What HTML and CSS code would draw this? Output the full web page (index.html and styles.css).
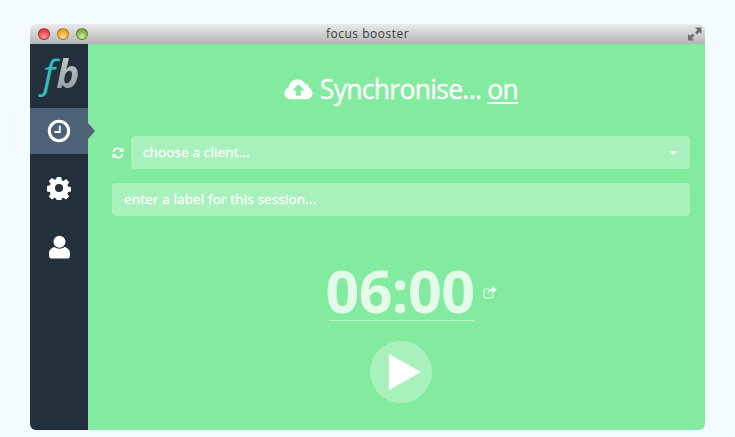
FILE: index.html
```html
<!DOCTYPE html>
<html lang="en">
<head>
<meta charset="utf-8">
<title>focus booster</title>
<link rel="stylesheet" href="styles.css">
</head>
<body>
<div class="window">
  <header class="titlebar">
    <div class="lights"><i class="light red"></i><i class="light yellow"></i><i class="light green"></i></div>
    <div class="title">focus booster</div>
    <svg class="resize" width="15" height="14" viewBox="0 0 15 14"><path d="M8 .5h6.500V7l-2-2-2.500 2.500-2-2L10.500 3zM1 7l2 2 2.500-2.500 2 2L5 11l2 2.500H1z" fill="#6f6f6f"/></svg>
  </header>
  <div class="body">
    <nav class="sidebar">
      <div class="logo"><span class="logo-f">f</span><span class="logo-b">b</span></div>
      <div class="nav-item active">
        <svg width="24" height="24" viewBox="0 0 24 24"><circle cx="12" cy="12" r="9.700" fill="none" stroke="#fff" stroke-width="3"/><path d="M12.800 6.500v6.500H7.500" fill="none" stroke="#fff" stroke-width="1.800"/></svg>
      </div>
      <div class="nav-item nudge">
        <svg width="24" height="24" viewBox="0 0 24 24"><path fill="#fff" fill-rule="evenodd" d="M9.800 1h4.400l.6 3.200 1.600.7 2.700-1.800 3.100 3.100-1.800 2.700.7 1.600 3 .6v4.400l-3 .6-.7 1.600 1.800 2.700-3.100 3.100-2.700-1.800-1.600.7-.6 3H9.800l-.6-3-1.600-.7-2.700 1.800-3.100-3.100 1.800-2.700-.7-1.600-3-.6V9.900l3-.6.7-1.600-1.800-2.700 3.100-3.100 2.700 1.800 1.600-.7zM12 8a4 4 0 1 0 0 8 4 4 0 0 0 0-8z"/></svg>
      </div>
      <div class="nav-item">
        <svg width="24" height="25" viewBox="0 0 24 25"><circle cx="12.500" cy="6.800" r="6" fill="#fff"/><path fill="#fff" d="M7.500 12c3 2.200 7 2.200 10 0 3 .8 5.500 3 5.500 6.500v2.500c0 1.500-1 2.500-2.500 2.500h-16C3 23.500 2 22.500 2 21v-2.500c0-3.500 2.500-5.700 5.500-6.500z"/></svg>
      </div>
    </nav>
    <main class="content">
      <h1 class="sync">
        <svg width="29" height="22" viewBox="0 0 30 22"><path fill="#fff" fill-rule="evenodd" d="M7 21.500C3 21.500.5 19 .5 15.500c0-2.800 1.700-5 4.200-5.800C5 4.800 9 .8 14 .8c3.700 0 7 2.200 8.300 5.500 1-.4 1.700-.4 2.200.1 1 .8 1.300 1.900 1 3.200 2.500.8 4 3 4 5.700 0 3.500-2.500 6.200-6.500 6.200zM15 6l-6.500 6.500h4V18h5v-5.500h4z"/></svg>
        <span>Synchronise... <u>on</u></span>
      </h1>
      <div class="row">
        <svg class="refresh" width="12" height="12" viewBox="0 0 13 13"><path fill="none" stroke="#fff" stroke-width="2" d="M1.500 5.500C2 3 4 1.500 6.500 1.500c1.700 0 3 .8 4 2M11.500 7.500C11 10 9 11.500 6.500 11.500c-1.700 0-3-.8-4-2"/><path fill="#fff" d="M12.500.5v4.800H7.700zM.5 12.500V7.700h4.800z"/></svg>
        <div class="field select"><span>choose a client...</span><i class="caret"></i></div>
      </div>
      <div class="field label-field"><span>enter a label for this session...</span></div>
      <div class="timer-row">
        <div class="timer">06:00</div>
        <svg class="popout" width="14" height="13" viewBox="0 0 14 13"><path fill="none" stroke="#fff" stroke-opacity=".8" stroke-width="1.200" d="M10 8.500v1.700c0 1.100-.7 1.800-1.800 1.800H2.800C1.700 12 1 11.300 1 10.200V4.800C1 3.700 1.700 3 2.800 3H6"/><path fill="#fff" fill-opacity=".85" d="M9 0l5 3.800-5 3.700V5.300C6.800 5.300 5.500 6.300 5 8.300c-.3-3.600 1.300-5.500 4-5.700z"/></svg>
      </div>
      <button class="play" type="button"><i class="play-icon"></i></button>
    </main>
  </div>
</div>
</body>
</html>
```
FILE: styles.css
```css
* { box-sizing: border-box; }
html, body { height: 100%; }
body {
  margin: 0;
  padding: 24px 30px 7px;
  background: #f4fbfe;
  font-family: "Open Sans", sans-serif;
  overflow: hidden;
}
.window {
  width: 675px;
  height: 406px;
  display: flex;
  flex-direction: column;
  border-radius: 6px;
  overflow: hidden;
}
.titlebar {
  position: relative;
  flex: 0 0 20px;
  display: flex;
  align-items: center;
  justify-content: center;
  background: linear-gradient(#ebebeb, #b4b4b4);
}
.lights {
  position: absolute;
  left: 7.500px;
  top: 3.500px;
  display: flex;
  gap: 7.250px;
}
.light {
  width: 12px;
  height: 12px;
  border-radius: 50%;
  border: 1px solid rgba(0, 0, 0, .3);
}
.red { background: radial-gradient(circle at 50% 80%, #ffa0a0, #e8333f 75%); }
.yellow { background: radial-gradient(circle at 50% 80%, #ffe08a, #eb9a1c 75%); }
.green { background: radial-gradient(circle at 50% 80%, #cdf09a, #74ab3a 75%); }
.title {
  font-size: 12px;
  line-height: 20px;
  letter-spacing: .5px;
  color: #3a3a3a;
}
.resize {
  position: absolute;
  right: 3px;
  top: 3px;
}
.body {
  flex: 1;
  display: flex;
  min-height: 0;
}
.sidebar {
  flex: 0 0 58px;
  display: flex;
  flex-direction: column;
  gap: 12px;
  background: #232f3a;
}
.logo {
  height: 52px;
  padding: 5px 0 0 13px;
  font-style: italic;
  font-size: 39px;
  line-height: 48px;
  white-space: nowrap;
}
.logo-f { color: #2fbcc0; font-weight: 400; }
.logo-b {
  font-weight: 700;
  margin-left: 1px;
  background: linear-gradient(#cfd3d6, #8d9499);
  -webkit-background-clip: text;
  background-clip: text;
  color: transparent;
}
.nav-item {
  position: relative;
  height: 46px;
  display: flex;
  align-items: center;
  justify-content: center;
}
.nav-item.nudge { padding-bottom: 2px; }
.nav-item.active { background: #4e6277; }
.nav-item.active::after {
  content: "";
  position: absolute;
  left: 100%;
  top: 15px;
  border-left: 7px solid #4e6277;
  border-top: 8px solid transparent;
  border-bottom: 8px solid transparent;
}
.content {
  flex: 1;
  display: flex;
  flex-direction: column;
  padding: 0 15px 0 24px;
  background: #83eb9f;
}
.sync {
  display: flex;
  align-items: center;
  justify-content: center;
  gap: 7px;
  height: 32px;
  margin: 29px 0 31px;
  font-weight: 400;
  font-size: 26.500px;
  letter-spacing: -.7px;
  color: #fff;
  -webkit-text-stroke: .35px #fff;
}
.sync u { text-underline-offset: 3px; text-decoration-thickness: 2px; }
.row {
  display: flex;
  align-items: center;
  gap: 7px;
  margin-bottom: 14px;
}
.refresh { flex: none; }
.field {
  height: 33px;
  display: flex;
  align-items: center;
  justify-content: space-between;
  padding: 0 12px 2px;
  border-radius: 4px;
  background: rgba(255, 255, 255, .3);
  color: #fff;
  font-size: 13.500px;
  font-weight: 400;
  letter-spacing: .15px;
  -webkit-text-stroke: .3px #fff;
}
.select { flex: 1; }
.caret {
  margin: 2px 1px 0 0;
  border-top: 4px solid #fff;
  border-left: 4px solid transparent;
  border-right: 4px solid transparent;
}
.timer-row {
  position: relative;
  align-self: center;
  width: 145px;
  height: 57px;
  margin: 48px 0 0;
  border-bottom: 1px solid rgba(255, 255, 255, .45);
}
.timer {
  margin-left: -3px;
  font-weight: 700;
  font-size: 59px;
  line-height: 53px;
  letter-spacing: -.6px;
  text-align: center;
  color: rgba(255, 255, 255, .78);
  white-space: nowrap;
}
.popout {
  position: absolute;
  left: 154px;
  top: 22px;
}
.play {
  align-self: center;
  width: 62px;
  height: 62px;
  margin: 20px 0 0;
  padding: 0 0 0 8px;
  display: flex;
  align-items: center;
  justify-content: center;
  border: 0;
  border-radius: 50%;
  background: rgba(255, 255, 255, .3);
}
.play-icon {
  border-left: 32px solid #fff;
  border-top: 18px solid transparent;
  border-bottom: 18px solid transparent;
}
```
